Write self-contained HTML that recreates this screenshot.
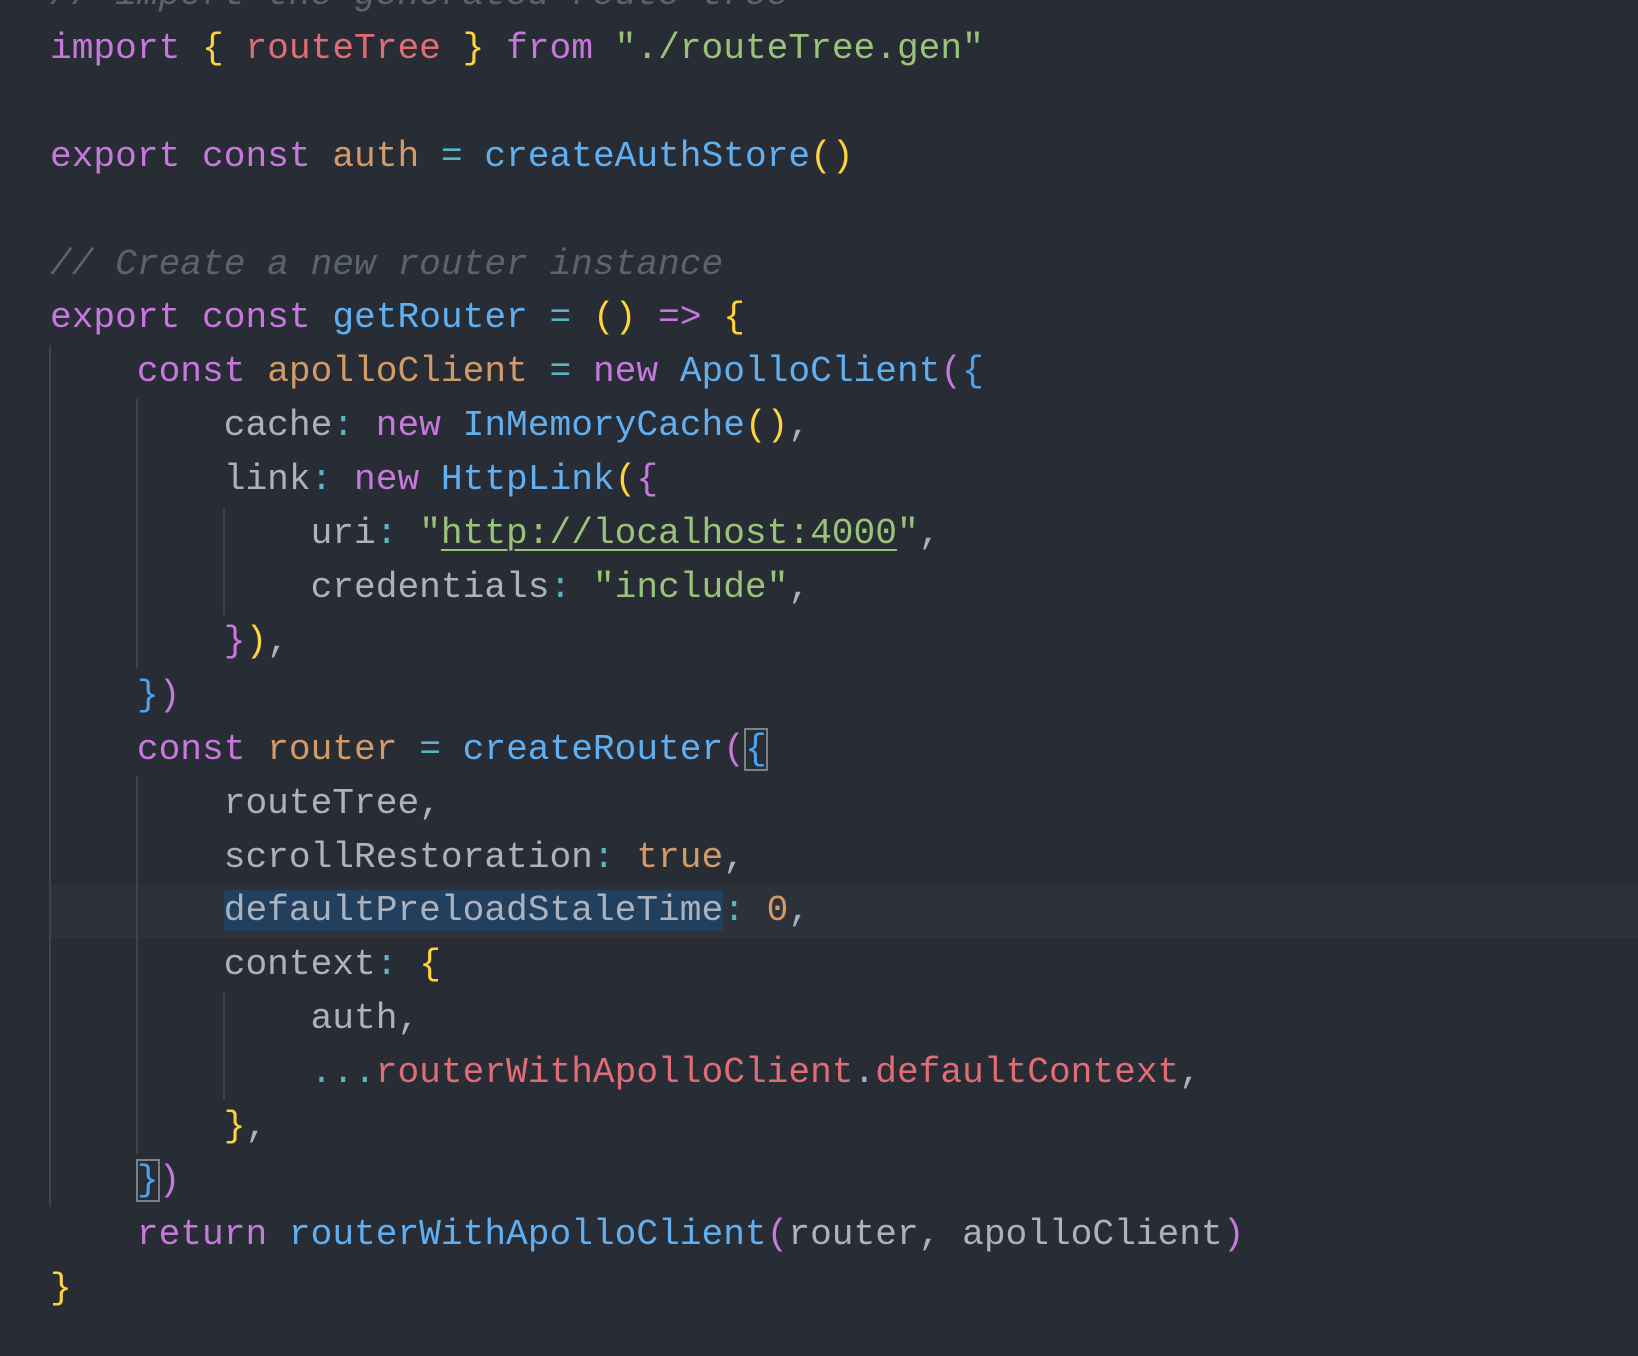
<!DOCTYPE html>
<html><head><meta charset="utf-8"><style>
html,body{margin:0;padding:0;background:#282c34;width:1638px;height:1356px;overflow:hidden}
pre{position:absolute;left:50px;top:-32px;margin:0;font-family:"Liberation Mono",monospace;font-size:36.2px;line-height:53.9px;color:#abb2bf;white-space:pre;z-index:2}
.k{color:#c678dd}.r{color:#e06c75}.y{color:#ffd43b}.g{color:#98c379}.b{color:#61afef}.o{color:#d19a66}.c{color:#56b6c2}
.cm{color:#5c6370;font-style:italic}.p{color:#c678dd}.bl{color:#4aa3f0}
.u{text-decoration:underline;text-decoration-thickness:2px;text-underline-offset:6px}
.sel{background:#22405e}
.box{outline:2px solid #7d8085;outline-offset:-1px}
.cur{position:absolute;left:50px;right:0;top:884px;height:53.9px;background:#2c313a;z-index:0}
.gd{position:absolute;width:2px;background:#3e434c;z-index:1}
</style></head><body>
<div class="cur"></div>
<div class="gd" style="left:49px;top:345px;height:862px"></div>
<div class="gd" style="left:136px;top:399px;height:269px"></div>
<div class="gd" style="left:136px;top:776px;height:378px"></div>
<div class="gd" style="left:223px;top:507px;height:108px"></div>
<div class="gd" style="left:223px;top:992px;height:108px"></div>
<pre><span class="cm">// import the generated route tree</span>
<span class="k">import</span> <span class="y">{</span> <span class="r">routeTree</span> <span class="y">}</span> <span class="k">from</span> <span class="g">"./routeTree.gen"</span>

<span class="k">export</span> <span class="k">const</span> <span class="o">auth</span> <span class="c">=</span> <span class="b">createAuthStore</span><span class="y">()</span>

<span class="cm">// Create a new router instance</span>
<span class="k">export</span> <span class="k">const</span> <span class="b">getRouter</span> <span class="c">=</span> <span class="y">()</span> <span class="k">=&gt;</span> <span class="y">{</span>
    <span class="k">const</span> <span class="o">apolloClient</span> <span class="c">=</span> <span class="k">new</span> <span class="b">ApolloClient</span><span class="p">(</span><span class="bl">{</span>
        cache<span class="c">:</span> <span class="k">new</span> <span class="b">InMemoryCache</span><span class="y">()</span>,
        link<span class="c">:</span> <span class="k">new</span> <span class="b">HttpLink</span><span class="y">(</span><span class="p">{</span>
            uri<span class="c">:</span> <span class="g">"<span class="u">http://localhost:4000</span>"</span>,
            credentials<span class="c">:</span> <span class="g">"include"</span>,
        <span class="p">}</span><span class="y">)</span>,
    <span class="bl">}</span><span class="p">)</span>
    <span class="k">const</span> <span class="o">router</span> <span class="c">=</span> <span class="b">createRouter</span><span class="p">(</span><span class="bl box">{</span>
        routeTree,
        scrollRestoration<span class="c">:</span> <span class="o">true</span>,
        <span class="sel">defaultPreloadStaleTime</span><span class="c">:</span> <span class="o">0</span>,
        context<span class="c">:</span> <span class="y">{</span>
            auth,
            <span class="c">...</span><span class="r">routerWithApolloClient</span>.<span class="r">defaultContext</span>,
        <span class="y">}</span>,
    <span class="bl box">}</span><span class="p">)</span>
    <span class="k">return</span> <span class="b">routerWithApolloClient</span><span class="p">(</span>router, apolloClient<span class="p">)</span>
<span class="y">}</span>
</pre>
</body></html>
